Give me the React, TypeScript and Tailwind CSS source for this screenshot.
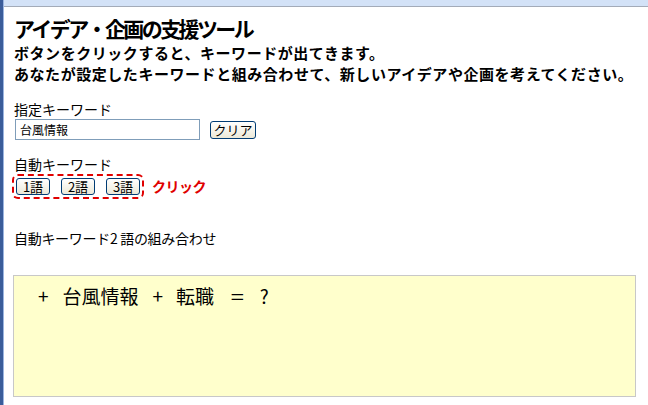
export default function App() {
  const xpButton =
    "h-[17px] w-[34px] rounded-[3px] border border-[#003c74] bg-gradient-to-b from-white to-[#ece9d8] text-[13px] leading-[15px] text-black";

  return (
    <div className="flex h-[405px] w-[648px] bg-white font-['Noto_Sans_CJK_JP',sans-serif] text-black">
      <div className="w-[3px] bg-[#3b5d9a]" />
      <div className="w-[1px] bg-[#9bb5e0]" />
      <div className="flex flex-1 flex-col">
        <div className="h-[7px] border-b border-[#a3abb8] bg-[#d3e2f7]" />
        <div className="flex flex-col pl-[10px] pr-[11px]">
          <h1 className="mt-[8px] text-[21px] font-bold leading-[26px] tracking-[-2.6px]">
            アイデア・企画の支援ツール
          </h1>
          <p className="mt-[1px] text-[15px] font-bold leading-[21px] tracking-[0.55px]">
            ボタンをクリックすると、キーワードが出てきます。
            <br />
            あなたが設定したキーワードと組み合わせて、新しいアイデアや企画を考えてください。
          </p>

          <div className="mt-[16px] text-[14px] leading-[18px]">指定キーワード</div>
          <div className="mt-[1px] flex items-center gap-[10px]">
            <div className="ml-[1px] flex h-[21px] w-[185px] items-center border border-[#7f9db9] px-[4px] text-[12px]">
              台風情報
            </div>
            <button className="h-[18px] w-[46px] rounded-[3px] border border-[#003c74] bg-gradient-to-b from-white to-[#ece9d8] text-[13px] leading-[16px]">
              クリア
            </button>
          </div>

          <div className="mt-[15px] text-[14px] leading-[18px]">自動キーワード</div>
          <div className="mt-[1px] flex items-center">
            <div className="-ml-[2px] flex items-center gap-[11px] rounded-[6px] border-2 border-dashed border-[#e00000] px-[2px] py-[2px]">
              <button className={xpButton}>1語</button>
              <button className={xpButton}>2語</button>
              <button className={xpButton}>3語</button>
            </div>
            <span className="ml-[8px] text-[14px] font-bold tracking-[-0.5px] text-[#e00000]">クリック</span>
          </div>

          <div className="mt-[30px] text-[14px] leading-[18px] tracking-[-0.3px]">自動キーワード2 語の組み合わせ</div>

          <div className="mt-[28px] h-[122px] w-[623px] -ml-[1px] border border-[#c8c8c8] bg-[#ffffcc] pl-[24px] pt-[9px]">
            <div className="flex text-[19px] leading-[22px]">
              <span>+</span>
              <span className="ml-[14px]">台風情報</span>
              <span className="ml-[14px]">+</span>
              <span className="ml-[13px]">転職</span>
              <span className="ml-[18px] scale-x-125">=</span>
              <span className="ml-[17px]">?</span>
            </div>
          </div>
        </div>
      </div>
    </div>
  );
}
